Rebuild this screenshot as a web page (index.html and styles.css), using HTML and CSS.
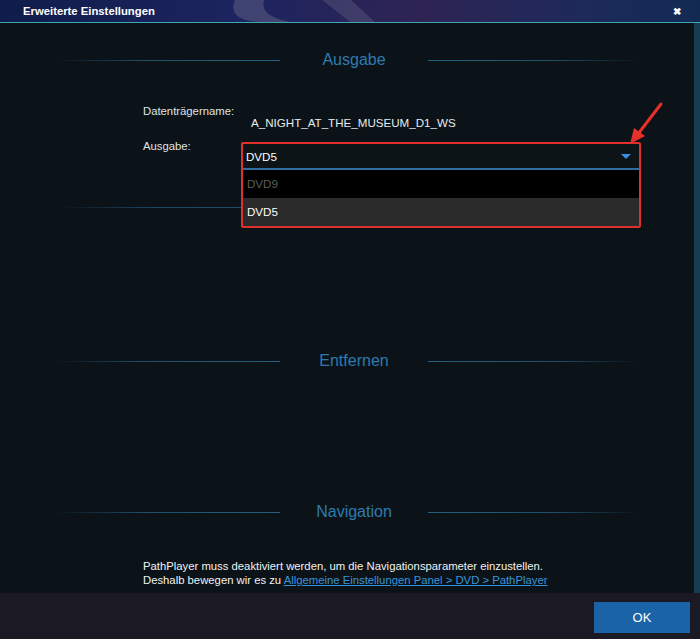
FILE: index.html
```html
<!DOCTYPE html>
<html lang="de">
<head>
    <meta charset="UTF-8">
    <title>Erweiterte Einstellungen</title>
    <link rel="stylesheet" href="styles.css">
</head>
<body>

<div class="dialog">
    <div class="title-bar">
        <svg class="title-logo" width="200" height="22" viewBox="0 0 200 22">
            <path d="M40 -10 Q20 20 60 22 L90 22 Q50 14 70 -10 Z" fill="#6a6a88" opacity="0.45"/>
            <path d="M110 -10 L150 22 L175 22 L140 -10 Z" fill="#6a6a88" opacity="0.35"/>
        </svg>
        <span class="title">Erweiterte Einstellungen</span>
        <span class="close">&#x2716;</span>
    </div>

    <div class="body">
        <div class="section-head">
            <span class="line left"></span>
            <span class="section-title">Ausgabe</span>
            <span class="line right"></span>
        </div>

        <div class="form">
            <div class="row name-row">
                <span class="label">Datenträgername:</span>
                <span class="value">A_NIGHT_AT_THE_MUSEUM_D1_WS</span>
            </div>
            <div class="row">
                <span class="label">Ausgabe:</span>
                <div class="select-wrap">
                    <div class="select">
                        <span>DVD5</span>
                        <span class="caret"></span>
                    </div>
                    <div class="option muted">DVD9</div>
                    <div class="option selected">DVD5</div>
                </div>
            </div>
            <span class="ghost-line"></span>
        </div>

        <svg class="arrow" width="40" height="50" viewBox="0 0 40 50">
            <path d="M35 4 L12 34" stroke="#e8302a" stroke-width="3" stroke-linecap="round"/>
            <path d="M4 44 L8 28 L19 36 Z" fill="#e8302a"/>
        </svg>

        <div class="section-head remove">
            <span class="line left"></span>
            <span class="section-title">Entfernen</span>
            <span class="line right"></span>
        </div>

        <div class="section-head nav">
            <span class="line left"></span>
            <span class="section-title">Navigation</span>
            <span class="line right"></span>
        </div>

        <p class="note">
            PathPlayer muss deaktiviert werden, um die Navigationsparameter einzustellen.<br>
            Deshalb bewegen wir es zu <a href="#">Allgemeine Einstellungen Panel &gt; DVD &gt; PathPlayer</a>
        </p>
    </div>

    <div class="footer">
        <button class="ok">OK</button>
    </div>
</div>

</body>
</html>
```

FILE: styles.css
```css
body {
    margin: 0;
    padding: 0;
    background-color: #0b1318;
    font-family: "Liberation Sans", Arial, sans-serif;
}

.dialog {
    width: 700px;
    height: 639px;
    display: flex;
    flex-direction: column;
    overflow: hidden;
}

.title-bar {
    position: relative;
    height: 22px;
    display: flex;
    align-items: center;
    justify-content: space-between;
    padding: 0 19px 0 23px;
    background: linear-gradient(90deg, #0f1d4a 0%, #1d2460 35%, #2e2454 60%, #1c2a5a 85%, #122a52 100%);
    border-bottom: 1px solid #3fa6b3;
    flex-shrink: 0;
}

.title-logo {
    position: absolute;
    left: 200px;
    top: 0;
}

.title {
    position: relative;
    color: #ffffff;
    font-size: 11.3px;
    font-weight: bold;
}

.close {
    position: relative;
    color: #ffffff;
    font-size: 10px;
    font-weight: bold;
}

.body {
    position: relative;
    flex: 1;
    background-color: #0b1318;
    border-right: 6px solid #163d52;
    padding-top: 26px;
}

.section-head {
    display: flex;
    align-items: center;
    justify-content: center;
    height: 22px;
}

.section-title {
    width: 148px;
    text-align: center;
    color: #2d7bb1;
    font-size: 16px;
}

.line {
    height: 1px;
}

.line.left {
    width: 226px;
    background: linear-gradient(90deg, rgba(38, 80, 105, 0) 0%, #1f4d6a 40%, #2a5f80 100%);
}

.line.right {
    width: 212px;
    background: linear-gradient(90deg, #2a5f80 0%, #1f4d6a 60%, rgba(38, 80, 105, 0) 100%);
}

.form {
    position: relative;
    padding: 34px 0 0 143px;
}

.row {
    display: flex;
    color: #dfe3e6;
    font-size: 11.3px;
}

.label {
    width: 98px;
}

.name-row .value {
    padding-top: 11px;
    padding-left: 10px;
    color: #e8ecee;
    font-size: 11.6px;
}

.row + .row {
    margin-top: 11px;
}

.select-wrap {
    position: relative;
    z-index: 2;
    width: 396px;
    border: 2px solid #e0302b;
    border-radius: 2px;
    margin-top: 2px;
    background-color: #000000;
}

.select {
    display: flex;
    justify-content: space-between;
    align-items: center;
    height: 24px;
    padding: 0 8px 0 3px;
    color: #ffffff;
    background-color: #0d1418;
    border-bottom: 2px solid #2f6ea3;
    font-size: 11.6px;
}

.caret {
    width: 0;
    height: 0;
    border-left: 5px solid transparent;
    border-right: 5px solid transparent;
    border-top: 5px solid #3b8ee0;
}

.option {
    height: 28px;
    line-height: 28px;
    padding-left: 4px;
    font-size: 11.6px;
}

.option.muted {
    color: #5d5d5d;
    background-color: #000000;
}

.option.selected {
    color: #ffffff;
    background-color: #2b2b2b;
}

.ghost-line {
    position: absolute;
    left: 60px;
    top: 136px;
    width: 182px;
    height: 1px;
    background: linear-gradient(90deg, rgba(31, 77, 106, 0) 0%, #1c4560 50%, #1f4d6a 100%);
}

.arrow {
    position: absolute;
    left: 626px;
    top: 77px;
}

.section-head.remove {
    margin-top: 122px;
}

.section-head.nav {
    margin-top: 129px;
}

.note {
    margin: 36px 0 0 143px;
    color: #f0f2f3;
    font-size: 11.3px;
    line-height: 14px;
}

.note a {
    color: #3a93d8;
}

.footer {
    height: 46px;
    flex-shrink: 0;
    display: flex;
    justify-content: flex-end;
    align-items: center;
    padding-right: 10px;
    background-color: #1b1a24;
}

.ok {
    width: 96px;
    height: 31px;
    margin-top: 2px;
    border: none;
    background-color: #1a63a6;
    color: #ffffff;
    font-family: "Liberation Sans", Arial, sans-serif;
    font-size: 13px;
}
```
